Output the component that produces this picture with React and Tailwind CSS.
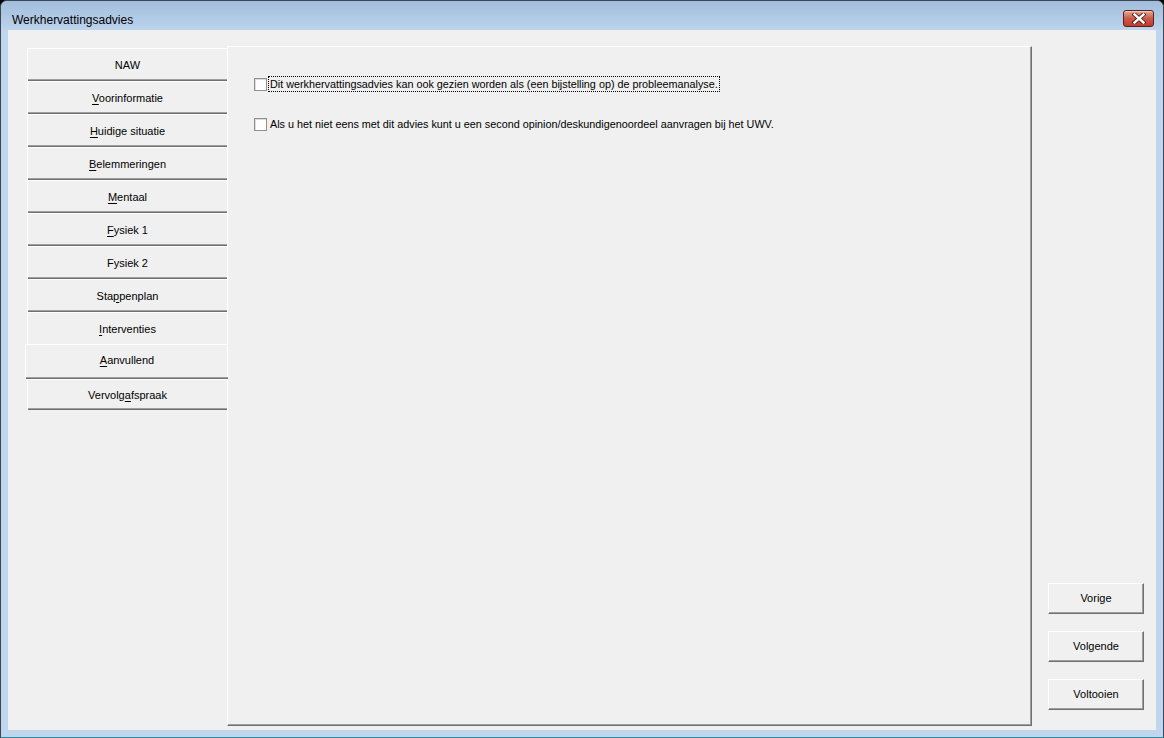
import React from "react";

const tabs = [
  { pre: "", key: "", post: "NAW" },
  { pre: "", key: "V", post: "oorinformatie" },
  { pre: "", key: "H", post: "uidige situatie" },
  { pre: "", key: "B", post: "elemmeringen" },
  { pre: "", key: "M", post: "entaal" },
  { pre: "", key: "F", post: "ysiek 1" },
  { pre: "", key: "", post: "Fysiek 2" },
  { pre: "Sta", key: "p", post: "penplan" },
  { pre: "", key: "I", post: "nterventies", noLine: true },
  { pre: "", key: "A", post: "anvullend", selected: true },
  { pre: "Vervolg", key: "a", post: "fspraak", last: true },
];

function Label({ pre, k, post }) {
  return (
    <span>
      {pre}
      {k && <span className="underline underline-offset-[2px]">{k}</span>}
      {post}
    </span>
  );
}

function Tab({ t }) {
  // hoogte en lijnen verschillen per tab, net als in het formulier
  let cls =
    "flex items-center justify-center border-t border-l border-white text-[11px] text-black ";
  if (t.selected) {
    cls +=
      "relative z-10 -ml-[2px] w-[203px] h-[35px] pb-[3px] shadow-[inset_0_-1px_0_#6f6f6f,inset_0_-2px_0_#a0a0a0]";
  } else if (t.noLine) {
    cls += "w-[200px] h-[32px] pt-[1px]";
  } else if (t.last) {
    cls +=
      "w-[200px] h-[31px] shadow-[inset_0_-1px_0_#6f6f6f,inset_0_-2px_0_#a0a0a0]";
  } else {
    cls +=
      "w-[200px] h-[33px] shadow-[inset_0_-1px_0_#6f6f6f,inset_0_-2px_0_#a0a0a0]";
  }
  return (
    <div className={cls}>
      <Label pre={t.pre} k={t.key} post={t.post} />
    </div>
  );
}

function Checkbox() {
  return (
    <div className="w-[13px] h-[13px] shrink-0 border border-[#8e8f8f] bg-white shadow-[inset_1px_1px_0_#dcdcdc]" />
  );
}

function Button({ children }) {
  return (
    <div className="w-[96px] h-[31px] flex items-center justify-center border-t border-l border-white border-r border-b border-r-[#6f6f6f] border-b-[#6f6f6f] shadow-[inset_-1px_-1px_0_#a0a0a0] text-[11px] text-black">
      {children}
    </div>
  );
}

export default function App() {
  return (
    <div
      className="w-[1164px] h-[738px] bg-black"
      style={{ fontFamily: '"Liberation Sans", Arial, sans-serif' }}
    >
      <div className="w-full h-full flex flex-col rounded-t-[7px] border border-[#3a4650] border-b-[#2b8aa0] bg-[#bfd6ee] overflow-hidden">
        {/* titelbalk */}
        <div className="h-[29px] shrink-0 flex items-center justify-between pl-[11px] pr-[9px] bg-gradient-to-b from-[#a2bddc] to-[#bcd4ed]">
          <span className="text-[12px] text-black pt-[8px]">Werkhervattingsadvies</span>
          <div className="mt-[6px] w-[31px] h-[17px] rounded-[3px] border border-[#5b1f1a] bg-gradient-to-b from-[#e3a898] via-[#c95a48] to-[#c0392b] flex items-center justify-center shadow-[inset_0_1px_0_#f0c8bc]">
            <svg width="14" height="11" viewBox="0 0 14 11">
              <path d="M2.5 1.5 L11.5 9.5 M11.5 1.5 L2.5 9.5" stroke="#4a1a16" strokeWidth="4.2" strokeLinecap="square" />
              <path d="M2.5 1.5 L11.5 9.5 M11.5 1.5 L2.5 9.5" stroke="#ffffff" strokeWidth="2.4" strokeLinecap="square" />
            </svg>
          </div>
        </div>

        {/* client */}
        <div className="mx-[7px] h-[700px] bg-[#f0f0f0] flex items-start pl-[19px] pt-[16px] pb-[4px] pr-[12px]">
          <div className="w-[200px] mt-[2px] flex flex-col">
            {tabs.map((t, i) => (
              <Tab key={i} t={t} />
            ))}
          </div>

          <div className="w-[805px] self-stretch border-t border-l border-white border-r border-b border-r-[#6f6f6f] border-b-[#6f6f6f] shadow-[inset_-1px_-1px_0_#a0a0a0] pl-[26px] pt-[29px] flex flex-col gap-[24px]">
            <div className="flex items-center h-[16px]">
              <Checkbox />
              <span className="ml-[1px] px-[1px] h-[16px] flex items-center border border-dotted border-black text-[10.8px] text-black whitespace-nowrap">
                Dit werkhervattingsadvies kan ook gezien worden als (een bijstelling op) de probleemanalyse.
              </span>
            </div>
            <div className="flex items-center h-[16px]">
              <Checkbox />
              <span className="ml-[3px] text-[10.8px] text-black whitespace-nowrap">
                Als u het niet eens met dit advies kunt u een second opinion/deskundigenoordeel aanvragen bij het UWV.
              </span>
            </div>
          </div>

          <div className="ml-[16px] self-stretch flex flex-col justify-end gap-[17px] pb-[16px]">
            <Button>Vorige</Button>
            <Button>Volgende</Button>
            <Button>Voltooien</Button>
          </div>
        </div>
      </div>
    </div>
  );
}
